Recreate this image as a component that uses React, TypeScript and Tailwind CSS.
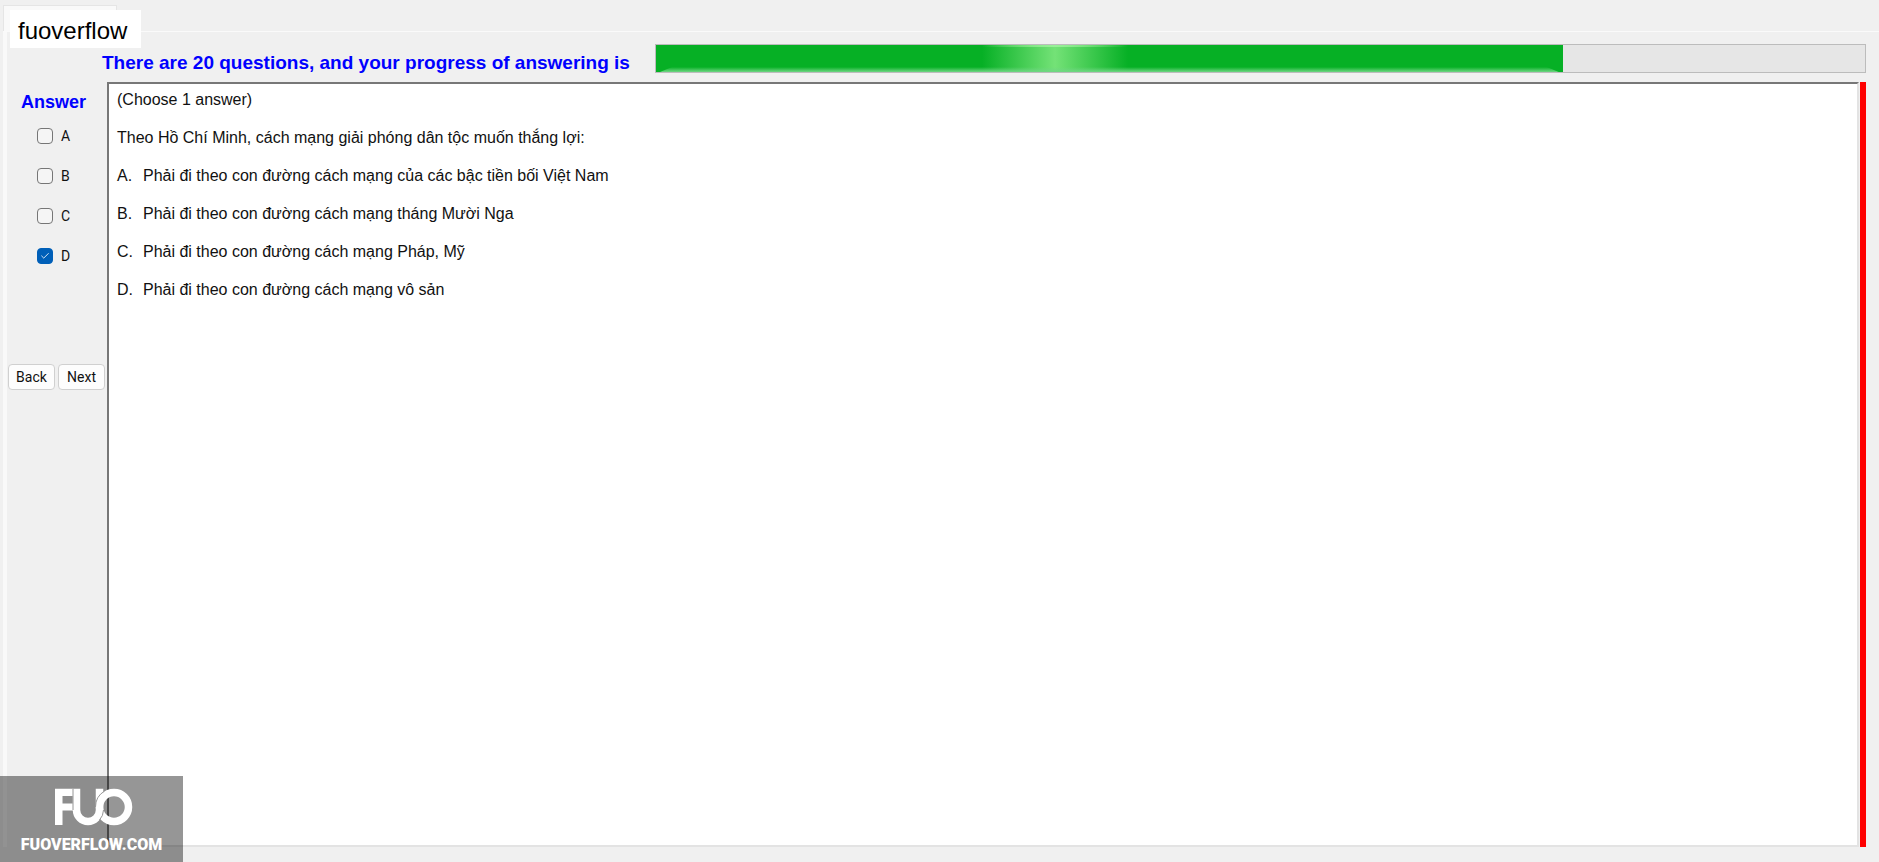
import { Check } from "lucide-react";
import { useState } from "react";

const choices = [
  { id: "A", text: "Phải đi theo con đường cách mạng của các bậc tiền bối Việt Nam" },
  { id: "B", text: "Phải đi theo con đường cách mạng tháng Mười Nga" },
  { id: "C", text: "Phải đi theo con đường cách mạng Pháp, Mỹ" },
  { id: "D", text: "Phải đi theo con đường cách mạng vô sản" },
];

const total = 20;
const answered = 15;

function ProgressBar() {
  return (
    <div
      role="progressbar"
      aria-label="Progress"
      aria-valuemin={0}
      aria-valuemax={total}
      aria-valuenow={answered}
      className="h-[29px] flex-1 border border-[#bcbcbc] bg-[#e6e6e6]"
    >
      <div
        className="relative h-full overflow-hidden bg-[#06b025]"
        style={{ width: `${(answered / total) * 100}%` }}
      >
        <div className="absolute inset-y-0 left-[36%] w-[16%] bg-linear-to-r from-transparent via-[#74e277] to-transparent" />
        <div className="absolute top-0 left-[36%] h-0.5 w-[16%] bg-linear-to-r from-transparent via-[#98f098] to-transparent" />
        <div className="absolute inset-x-1 bottom-0 h-[5px] bg-linear-to-b from-transparent to-[#6fd683] [clip-path:polygon(12px_0,calc(100%-12px)_0,100%_100%,0_100%)]" />
      </div>
    </div>
  );
}

function AnswerBox({
  id,
  checked,
  onChange,
}: {
  id: string;
  checked: boolean;
  onChange: () => void;
}) {
  return (
    <label className="flex h-4 items-center gap-2 text-sm">
      <span className="relative flex h-4 w-4">
        <input
          type="checkbox"
          checked={checked}
          onChange={onChange}
          className="h-4 w-4 appearance-none rounded-[4px] border border-[#767676] bg-[#f5f5f5] checked:border-[#005fb8] checked:bg-[#005fb8]"
        />
        {checked && (
          <Check
            className="pointer-events-none absolute top-[3px] left-[3px] h-2.5 w-2.5 text-white"
            strokeWidth={2}
          />
        )}
      </span>
      {id}
    </label>
  );
}

function Watermark() {
  return (
    <div className="absolute bottom-0 left-0 flex h-[86px] w-[183px] flex-col items-center bg-black/41 pt-3 text-white">
      <svg viewBox="-4 0 82 38" className="h-[38px] w-[82px]" fill="none">
        <path d="M0 .7H18V8H7.500V15.500H18V22.500H7.500V37H0Z" fill="currentColor" />
        <path d="M21.500 .7V22a11.500 11.500 0 0 0 23 0V.7" stroke="currentColor" strokeWidth="7.500" />
        <circle cx="59" cy="19" r="14.500" stroke="currentColor" strokeWidth="7.500" />
        <path d="M18 .7V22M40.500 19a18.500 18.500 0 0 1 9-15.900M48.500 22a15.300 15.300 0 0 1-4 10" stroke="#969696" strokeWidth="1" />
      </svg>
      <span className="mt-[7px] text-base font-black">FUOVERFLOW.COM</span>
    </div>
  );
}

export default function App() {
  const [selected, setSelected] = useState("D");

  return (
    <div className="relative flex min-h-screen flex-col bg-[#f0f0f0] pt-[5px] pr-[13px] pb-[15px] pl-[3px] font-['Roboto',sans-serif] text-[#111]">
      <header className="relative -mr-[13px] h-[27px] border-b border-[#fafafa]">
        <div className="h-full w-[114px] border border-b-0 border-[#e5e5e5] bg-[#f9f9f9]" />
        <h1 className="absolute top-[5px] left-[7px] z-10 flex h-[38px] items-center bg-white pt-1 pr-3.5 pl-2 font-['Liberation_Sans',sans-serif] text-2xl text-black">
          fuoverflow
        </h1>
      </header>
      <main className="flex flex-1 flex-col border-l-4 border-[#f9f9f9] pt-3">
        <div className="flex items-end gap-5 pl-[95px]">
          <p className="w-[533px] shrink-0 font-['Liberation_Sans',sans-serif] text-[19px] leading-5 font-bold whitespace-nowrap text-[#0000ff]">
            There are {total} questions, and your progress of answering is
          </p>
          <ProgressBar />
        </div>
        <div className="mt-[9px] flex flex-1">
          <aside className="w-[100px] shrink-0">
            <h2 className="pt-2.5 pl-[14px] font-['Liberation_Sans',sans-serif] text-lg leading-5 font-bold text-[#0000ff]">
              Answer
            </h2>
            <div className="mt-4 flex flex-col gap-6 pl-[30px]">
              {choices.map(({ id }) => (
                <AnswerBox
                  key={id}
                  id={id}
                  checked={selected === id}
                  onChange={() => setSelected(id)}
                />
              ))}
            </div>
            <div className="mt-[100px] flex gap-[3px] pl-px text-sm">
              <button className="h-[26px] w-[47px] rounded-[4px] border border-[#d0d0d0] bg-[#fdfdfd]">
                Back
              </button>
              <button className="h-[26px] w-[47px] rounded-[4px] border border-[#d0d0d0] bg-[#fdfdfd]">
                Next
              </button>
            </div>
          </aside>
          <section className="flex-1 border-2 border-t-[#777] border-r-[#e3e3e3] border-b-[#e3e3e3] border-l-[#777] bg-white px-2 pt-1.5 font-['Liberation_Sans',sans-serif] text-base leading-5">
            <p>(Choose 1 answer)</p>
            <p className="mt-[18px]">
              Theo Hồ Chí Minh, cách mạng giải phóng dân tộc muốn thắng lợi:
            </p>
            <ol className="mt-[18px] flex flex-col gap-[18px]">
              {choices.map(({ id, text }) => (
                <li key={id} className="flex">
                  <span className="w-[26px]">{id}.</span>
                  {text}
                </li>
              ))}
            </ol>
          </section>
          <div className="ml-px w-1.5 bg-[#ff0000]" />
        </div>
      </main>
      <Watermark />
    </div>
  );
}
